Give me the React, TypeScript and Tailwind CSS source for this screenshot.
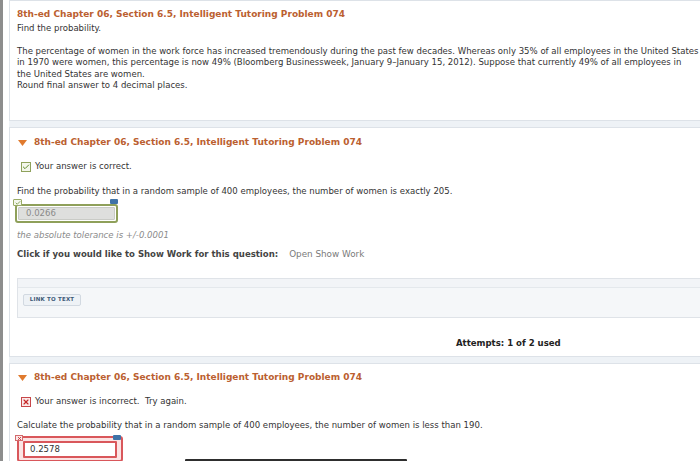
import { Check, X } from "lucide-react";

const Title = ({ arrow }: { arrow?: boolean }) => (
  <div className="flex items-center h-[12px] font-bold text-[9px] text-[#bb6030] whitespace-nowrap">
    {arrow && (
      <svg width="9" height="6" viewBox="0 0 9 6" className="ml-[1px] mr-[7px]">
        <polygon points="0,0 9,0 4.5,6" fill="#e07a2e" />
      </svg>
    )}
    8th-ed Chapter 06, Section 6.5, Intelligent Tutoring Problem 074
  </div>
);

export default function App() {
  return (
    <div className="relative w-[700px] h-[461px] overflow-hidden bg-white flex font-['DejaVu_Sans',Verdana,sans-serif] text-[8.55px] leading-[11.5px] text-[#333]">
      {/* left frame edge */}
      <div className="w-[3px] shrink-0 bg-[#8d8d8d]" />
      <div className="w-[6px] shrink-0 bg-white" />

      <div className="w-[720px] shrink-0 bg-[#eef2f6] flex flex-col gap-[6px]">
        <div className="h-[3px] -mb-[6px] bg-[#d9dce2]" />

        {/* problem statement */}
        <div className="bg-white border border-[#dde2e8] px-[7px] pt-[8px] pb-[29px]">
          <Title />
          <div className="mt-[2px]">Find the probability.</div>
          <div className="mt-[11.5px] whitespace-nowrap leading-[11.3px]">
            The percentage of women in the work force has increased tremendously during the past few decades. Whereas only 35% of all employees in the United States
            <br />
            in 1970 were women, this percentage is now 49% (Bloomberg Businessweek, January 9–January 15, 2012). Suppose that currently 49% of all employees in
            <br />
            the United States are women.
            <br />
            Round final answer to 4 decimal places.
          </div>
        </div>

        {/* part 1 - correct */}
        <div className="bg-white border border-[#dde2e8] px-[7px] pt-[9px] pb-[6px]">
          <Title arrow />
          <div className="mt-[12px] flex items-center h-[12px] pl-[4px]">
            <span className="w-[10px] h-[10px] mr-[4px] flex items-center justify-center border border-[#8fa25c] bg-[#f4f7ec]">
              <Check className="w-[8px] h-[8px] text-[#5f8a2a]" strokeWidth={3} />
            </span>
            Your answer is correct.
          </div>
          <div className="mt-[13px] h-[12px] flex items-center">
            Find the probability that in a random sample of 400 employees, the number of women is exactly 205.
          </div>
          <div className="relative mt-[1px] -ml-[4px] w-[105px] pt-[5px] pl-[2px]">
            <div className="h-[19px] w-[103px] rounded-[3px] border-2 border-[#8fa05a] p-[1px]">
              <div className="h-full bg-[#dedfdd] border border-[#c9cbc6] rounded-[1px] pl-[7px] flex items-center text-[#8a8a8a]">
                0.0266
              </div>
            </div>
            <span className="absolute left-0 top-0 w-[9px] h-[7px] flex items-center justify-center border border-[#9aab66] bg-[#f4f7ec] rounded-[1px]">
              <Check className="w-[6px] h-[6px] text-[#6b8f32]" strokeWidth={3} />
            </span>
            <span className="absolute left-[97px] top-0 w-[8px] h-[5px] bg-[#3f73a8] rounded-[1px]" />
          </div>
          <div className="mt-[7px] h-[12px] flex items-center italic text-[#8a8a8a]">the absolute tolerance is +/-0.0001</div>
          <div className="mt-[7px] h-[12px] flex items-center whitespace-nowrap">
            <span className="font-bold text-[#444]">Click if you would like to Show Work for this question:</span>
            <span className="ml-[11px] text-[8.8px] text-[#7a7a7a]">Open Show Work</span>
          </div>
          <div className="mt-[17px] h-[40px] border border-[#dfe3e8] bg-[#f5f7f9]">
            <div className="h-[9px] border-b border-[#e4e8ec] bg-[#f2f4f7]" />
            <div className="ml-[5px] mt-[6px] w-[58px] h-[12px] flex items-center justify-center border border-[#d2d9e1] bg-[#eef2f6] rounded-[2px] text-[5.5px] font-bold tracking-[0.2px] text-[#3e5a78]">
              LINK TO TEXT
            </div>
          </div>
          <div className="mt-[20px] ml-[439px] h-[12px] flex items-center font-bold text-[#222]">Attempts: 1 of 2 used</div>
        </div>

        {/* part 2 - incorrect */}
        <div className="flex-1 bg-white border border-[#dde2e8] px-[7px] pt-[8px]">
          <Title arrow />
          <div className="mt-[12px] flex items-center h-[12px] pl-[4px]">
            <span className="w-[10px] h-[10px] mr-[4px] flex items-center justify-center border border-[#c7474a] bg-[#fbe9e9]">
              <X className="w-[8px] h-[8px] text-[#c62828]" strokeWidth={3.5} />
            </span>
            Your answer is incorrect.&nbsp; Try again.
          </div>
          <div className="mt-[12px] h-[12px] flex items-center">
            Calculate the probability that in a random sample of 400 employees, the number of women is less than 190.
          </div>
          <div className="relative mt-[3px] -ml-[2px] w-[108px] pt-[1px] pl-[2px]">
            <div className="h-[26px] w-[106px] rounded-[3px] border-2 border-[#d9575b] bg-[#fbe4e4] px-[4px] pt-[3px]">
              <div className="h-[17px] bg-white border-2 border-[#d9575b] rounded-[1px] pl-[5px] flex items-center text-[#333]">
                0.2578
              </div>
            </div>
            <span className="absolute left-0 top-0 w-[8px] h-[6px] flex items-center justify-center border border-[#d36a6c] bg-[#fbe9e9]">
              <X className="w-[5px] h-[5px] text-[#c62828]" strokeWidth={4} />
            </span>
            <span className="absolute left-[98px] top-0 w-[8px] h-[5px] bg-[#3f73a8] rounded-[1px]" />
          </div>
        </div>
      </div>

      {/* edge of an overlay at the bottom */}
      <div className="absolute left-[185px] top-[459px] w-[222px] h-[2px] bg-[#2e2e2e] rounded-t-[1px]" />
    </div>
  );
}
